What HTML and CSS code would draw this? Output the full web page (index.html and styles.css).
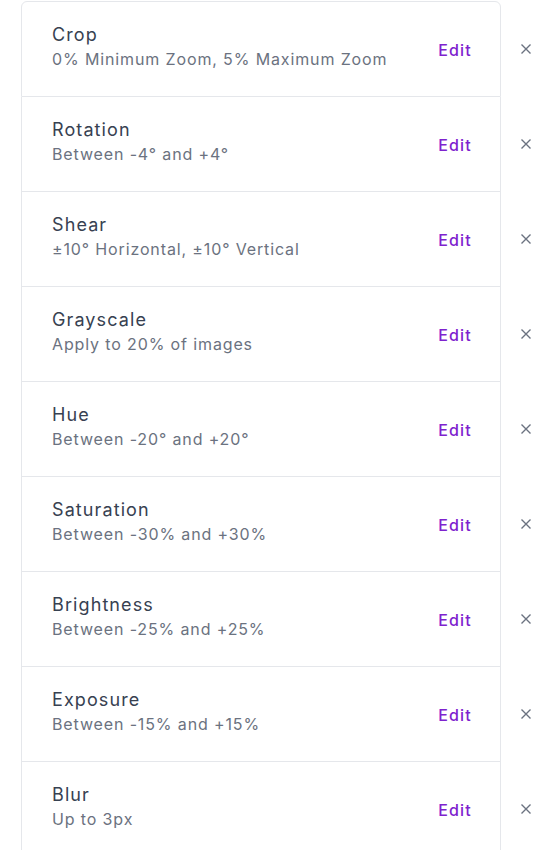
FILE: index.html
```html
<!DOCTYPE html>
<html lang="en">
<head>
<meta charset="utf-8">
<title>Augmentations</title>
<link rel="stylesheet" href="styles.css">
</head>
<body>
<ul class="list">
  <li class="row">
    <div class="item">
      <div class="text"><div class="title">Crop</div><div class="desc">0% Minimum Zoom, 5% Maximum Zoom</div></div>
      <button class="edit">Edit</button>
    </div>
    <button class="remove" aria-label="Remove"><svg viewBox="0 0 10 10" width="10" height="10"><path d="M0.5 0.5L9.5 9.5M9.5 0.5L0.5 9.5"/></svg></button>
  </li>
  <li class="row">
    <div class="item">
      <div class="text"><div class="title">Rotation</div><div class="desc">Between -4° and +4°</div></div>
      <button class="edit">Edit</button>
    </div>
    <button class="remove" aria-label="Remove"><svg viewBox="0 0 10 10" width="10" height="10"><path d="M0.5 0.5L9.5 9.5M9.5 0.5L0.5 9.5"/></svg></button>
  </li>
  <li class="row">
    <div class="item">
      <div class="text"><div class="title">Shear</div><div class="desc">±10° Horizontal, ±10° Vertical</div></div>
      <button class="edit">Edit</button>
    </div>
    <button class="remove" aria-label="Remove"><svg viewBox="0 0 10 10" width="10" height="10"><path d="M0.5 0.5L9.5 9.5M9.5 0.5L0.5 9.5"/></svg></button>
  </li>
  <li class="row">
    <div class="item">
      <div class="text"><div class="title">Grayscale</div><div class="desc">Apply to 20% of images</div></div>
      <button class="edit">Edit</button>
    </div>
    <button class="remove" aria-label="Remove"><svg viewBox="0 0 10 10" width="10" height="10"><path d="M0.5 0.5L9.5 9.5M9.5 0.5L0.5 9.5"/></svg></button>
  </li>
  <li class="row">
    <div class="item">
      <div class="text"><div class="title">Hue</div><div class="desc">Between -20° and +20°</div></div>
      <button class="edit">Edit</button>
    </div>
    <button class="remove" aria-label="Remove"><svg viewBox="0 0 10 10" width="10" height="10"><path d="M0.5 0.5L9.5 9.5M9.5 0.5L0.5 9.5"/></svg></button>
  </li>
  <li class="row">
    <div class="item">
      <div class="text"><div class="title">Saturation</div><div class="desc">Between -30% and +30%</div></div>
      <button class="edit">Edit</button>
    </div>
    <button class="remove" aria-label="Remove"><svg viewBox="0 0 10 10" width="10" height="10"><path d="M0.5 0.5L9.5 9.5M9.5 0.5L0.5 9.5"/></svg></button>
  </li>
  <li class="row">
    <div class="item">
      <div class="text"><div class="title">Brightness</div><div class="desc">Between -25% and +25%</div></div>
      <button class="edit">Edit</button>
    </div>
    <button class="remove" aria-label="Remove"><svg viewBox="0 0 10 10" width="10" height="10"><path d="M0.5 0.5L9.5 9.5M9.5 0.5L0.5 9.5"/></svg></button>
  </li>
  <li class="row">
    <div class="item">
      <div class="text"><div class="title">Exposure</div><div class="desc">Between -15% and +15%</div></div>
      <button class="edit">Edit</button>
    </div>
    <button class="remove" aria-label="Remove"><svg viewBox="0 0 10 10" width="10" height="10"><path d="M0.5 0.5L9.5 9.5M9.5 0.5L0.5 9.5"/></svg></button>
  </li>
  <li class="row">
    <div class="item">
      <div class="text"><div class="title">Blur</div><div class="desc">Up to 3px</div></div>
      <button class="edit">Edit</button>
    </div>
    <button class="remove" aria-label="Remove"><svg viewBox="0 0 10 10" width="10" height="10"><path d="M0.5 0.5L9.5 9.5M9.5 0.5L0.5 9.5"/></svg></button>
  </li>
</ul>
</body>
</html>
```

FILE: styles.css
```css
* { box-sizing: border-box; }
html, body { margin: 0; padding: 0; background: #ffffff; }
body {
  font-family: Inter, "Noto Sans", sans-serif;
  -webkit-font-smoothing: antialiased;
}
.list {
  list-style: none;
  margin: 0;
  padding: 1px 0 0 21px;
}
.row {
  display: flex;
  align-items: stretch;
}
.item {
  width: 480px;
  height: 95px;
  display: flex;
  align-items: center;
  justify-content: space-between;
  padding: 0 28px 1px 30px;
  border-left: 1px solid #e5e7eb;
  border-right: 1px solid #e5e7eb;
  border-bottom: 1px solid #e5e7eb;
}
.row:first-child .item {
  height: 96px;
  border-top: 1px solid #e5e7eb;
  border-radius: 6px 6px 0 0;
}
.text {
  display: flex;
  flex-direction: column;
  margin-bottom: 3px;
}
.title {
  font-size: 18px;
  line-height: 24px;
  letter-spacing: 1.1px;
  color: #374151;
  font-weight: 400;
}
.desc {
  font-size: 16px;
  line-height: 24px;
  letter-spacing: 0.87px;
  color: #6b7280;
}
.edit {
  background: none;
  border: 0;
  padding: 0;
  margin-top: 2px;
  font-family: inherit;
  font-size: 16px;
  font-weight: 500;
  letter-spacing: 1.2px;
  color: #7e22ce;
  line-height: 24px;
  cursor: pointer;
}
.remove {
  width: 50px;
  background: none;
  border: 0;
  padding: 0 0 1px 0;
  display: flex;
  align-items: center;
  justify-content: center;
  cursor: pointer;
}
.remove svg path {
  stroke: #6b7280;
  stroke-width: 1.4;
  fill: none;
}
```
